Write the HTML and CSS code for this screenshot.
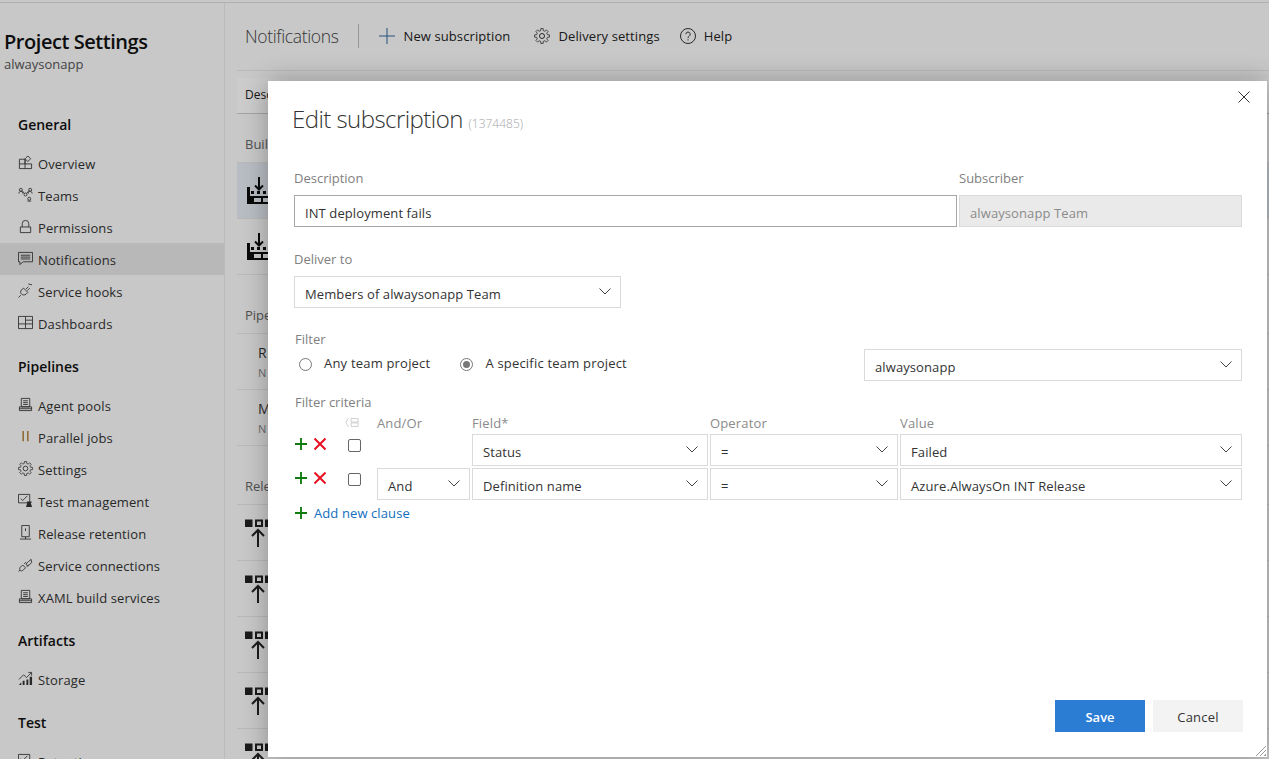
FILE: index.html
```html
<!DOCTYPE html>
<html lang="en">
<head>
  <meta charset="UTF-8">
  <meta name="viewport" content="width=device-width, initial-scale=1.0">
  <title>Edit subscription</title>
  <link rel="stylesheet" href="styles.css">
</head>
<body>
  <svg class="sprite" xmlns="http://www.w3.org/2000/svg">
    <defs>
      <symbol id="i-overview" viewBox="0 0 16 16"><path d="M1.500 4.500h6v10h-6zM1.500 9.500h13v5h-7M7.500 9.500V4.500M10.500 1l3 3-3 3-3-3z"/></symbol>
      <symbol id="i-teams" viewBox="0 0 16 16"><circle cx="3" cy="3" r="1.600"/><circle cx="13" cy="3" r="1.600"/><circle cx="8" cy="8" r="1.600"/><circle cx="12" cy="12.500" r="1.600"/><path d="M1 7c0-1.500 1-2.400 2-2.400S5 5.500 5 7M11 7c0-1.500 1-2.400 2-2.400S15 5.500 15 7M4.500 4l2.300 3M11.500 4L9.200 7M10 15h4"/></symbol>
      <symbol id="i-lock" viewBox="0 0 16 16"><path d="M2.500 8.500h11v6h-11zM4.500 8.500V5a3.500 3.500 0 0 1 7 0v3.500"/></symbol>
      <symbol id="i-chat" viewBox="0 0 16 16"><path d="M.5 1.500h15v10H5.500l-3.500 3v-3H.5zM3 4.500h10M3 6.500h10M3 8.500h10"/></symbol>
      <symbol id="i-hook" viewBox="0 0 16 16"><path d="M6 5.500l4.500 4.500-2 2c-1.500 1-3 1-4.500 0s-1.500-3-.5-4.500zM3 13l-2.500 2.500M8.500 6.500L11 4M10 8l2.500-2.500M11 1l4 1"/></symbol>
      <symbol id="i-board" viewBox="0 0 16 16"><path d="M.5 1.500h15v13H.5zM.5 9.500h15M8 1.500v13M8 5.500h7.500"/></symbol>
      <symbol id="i-agent" viewBox="0 0 16 16"><path d="M3.500 1.500h9v9h-9zM5.500 4h5M5.500 6h5M5.500 8h5M1.500 10.500h13v4h-13zM1.500 12.500h13"/></symbol>
      <symbol id="i-pause" viewBox="0 0 16 16"><path class="tan" d="M5.500 2v11M10.500 2v11"/></symbol>
      <symbol id="i-gear" viewBox="0 0 16 16"><path class="gear" d="M13.34 6.670L15.41 6.830V9.170L13.34 9.330 12.71 10.830 14.07 12.410 12.410 14.070 10.830 12.710 9.330 13.340 9.170 15.410H6.830L6.670 13.340 5.170 12.710 3.590 14.070 1.930 12.410 3.290 10.830 2.660 9.330 .59 9.170V6.830L2.660 6.670 3.290 5.170 1.930 3.590 3.590 1.930 5.170 3.290 6.670 2.660 6.830 .59H9.170L9.330 2.660 10.830 3.290 12.410 1.930 14.070 3.590 12.710 5.170z"/><circle cx="8" cy="8" r="2.500"/></symbol>
      <symbol id="i-test" viewBox="0 0 16 16"><path d="M.5 1.500h12v9H.5zM3 6l2 2 5-5"/><path class="solid" d="M9.500 9h5v1.500h-1l1.500 4.500H8.500l1.500-4.500h-.5z"/></symbol>
      <symbol id="i-retention" viewBox="0 0 16 16"><path d="M4 .5h8v12H4zM8 3.500v3M2 15h12M8 12.500V15"/></symbol>
      <symbol id="i-connect" viewBox="0 0 16 16"><path d="M2 11.500L5 8.500l3 3-3 3c-1 .5-2 .5-2.500 0s-1-2-.5-3zM.5 15.500L2 14M8.500 7.500L11 5l3-2.500 .5 3.500-3 3-1 1zM6.500 7.500l2-2M9.500 10l2-2"/></symbol>
      <symbol id="i-storage" viewBox="0 0 16 16"><path d="M1 9l5-5 3 3 5-5M11 1.500h3.500V5"/><path class="solid" d="M1 15l2.500-3V15zM5 10.500h2V15H5zM9 9h2v6H9zM12.500 6H15v9h-2.500z"/></symbol>
      <symbol id="i-plus" viewBox="0 0 16 16"><path d="M8 0v16M0 8h16"/></symbol>
      <symbol id="i-help" viewBox="0 0 16 16"><circle cx="8" cy="8" r="7.500"/><path d="M5.800 6.200a2.200 2.200 0 1 1 3.400 1.900c-.8.5-1.200 1-1.200 2M8 11.300v1.200"/></symbol>
      <symbol id="i-close" viewBox="0 0 12 12"><path d="M.5 .5l11 11M11.500 .5l-11 11"/></symbol>
      <symbol id="i-chev" viewBox="0 0 12 7"><path d="M.5 .5L6 6l5.500-5.500"/></symbol>
      <symbol id="i-factory" viewBox="0 0 30 28"><path class="solid" fill-rule="evenodd" d="M0 10h3v9h27v8H0zM7 21h7v4H7zM16 21h7v4h-7zM4 14h3v3H4zM10 14h3v3h-3zM16 14h3v3h-3zM22 14h3v3h-3z"/><path class="heavy" d="M12 0v12M8 8.500l4 4 4-4"/></symbol>
      <symbol id="i-release" viewBox="0 0 30 28"><path class="solid" d="M0 .5h7.500V8H0zM20 .5h8V8h-8z"/><path class="heavy" d="M11 1.500h6V7h-6zM13 28V11.500M7 17l6-6 6 6"/></symbol>
      <symbol id="i-order" viewBox="0 0 16 12"><path d="M7 1.500h8v4H7zM7 6.500h8v4H7zM4 1L1 6l3 5"/></symbol>
    </defs>
  </svg>

  <div class="page">
    <nav class="sidebar">
      <h1 class="project-title">Project Settings</h1>
      <div class="project-name">alwaysonapp</div>

      <h2 class="nav-head nav-head-first">General</h2>
      <a class="nav-item"><svg class="ico"><use href="#i-overview"/></svg>Overview</a>
      <a class="nav-item"><svg class="ico"><use href="#i-teams"/></svg>Teams</a>
      <a class="nav-item"><svg class="ico"><use href="#i-lock"/></svg>Permissions</a>
      <a class="nav-item active"><svg class="ico"><use href="#i-chat"/></svg>Notifications</a>
      <a class="nav-item"><svg class="ico"><use href="#i-hook"/></svg>Service hooks</a>
      <a class="nav-item"><svg class="ico"><use href="#i-board"/></svg>Dashboards</a>

      <h2 class="nav-head">Pipelines</h2>
      <a class="nav-item"><svg class="ico"><use href="#i-agent"/></svg>Agent pools</a>
      <a class="nav-item"><svg class="ico"><use href="#i-pause"/></svg>Parallel jobs</a>
      <a class="nav-item"><svg class="ico"><use href="#i-gear"/></svg>Settings</a>
      <a class="nav-item"><svg class="ico"><use href="#i-test"/></svg>Test management</a>
      <a class="nav-item"><svg class="ico"><use href="#i-retention"/></svg>Release retention</a>
      <a class="nav-item"><svg class="ico"><use href="#i-connect"/></svg>Service connections</a>
      <a class="nav-item"><svg class="ico"><use href="#i-agent"/></svg>XAML build services</a>

      <h2 class="nav-head">Artifacts</h2>
      <a class="nav-item"><svg class="ico"><use href="#i-storage"/></svg>Storage</a>

      <h2 class="nav-head">Test</h2>
      <a class="nav-item"><svg class="ico"><use href="#i-test"/></svg>Retention</a>
    </nav>

    <main class="content">
      <header class="toolbar">
        <span class="toolbar-title">Notifications</span>
        <span class="toolbar-sep"></span>
        <a class="tool"><svg class="tool-ico tool-plus"><use href="#i-plus"/></svg>New subscription</a>
        <a class="tool tool-delivery"><svg class="tool-ico"><use href="#i-gear"/></svg>Delivery settings</a>
        <a class="tool tool-help"><svg class="tool-ico"><use href="#i-help"/></svg>Help</a>
      </header>

      <div class="table-head">Description</div>

      <div class="group-label group-first">Build</div>
      <div class="row row-selected"><svg class="row-ico"><use href="#i-factory"/></svg></div>
      <div class="row"><svg class="row-ico"><use href="#i-factory"/></svg></div>

      <div class="group-label">Pipelines</div>
      <div class="row row-text"><span class="row-main">R</span><span class="row-sub">N</span></div>
      <div class="row row-text"><span class="row-main">M</span><span class="row-sub">N</span></div>

      <div class="group-label">Release</div>
      <div class="row"><svg class="row-ico rel"><use href="#i-release"/></svg></div>
      <div class="row"><svg class="row-ico rel"><use href="#i-release"/></svg></div>
      <div class="row"><svg class="row-ico rel"><use href="#i-release"/></svg></div>
      <div class="row"><svg class="row-ico rel"><use href="#i-release"/></svg></div>
      <div class="row"><svg class="row-ico rel"><use href="#i-release"/></svg></div>
    </main>
  </div>

  <div class="scrim"></div>

  <section class="dialog">
    <svg class="dialog-close"><use href="#i-close"/></svg>
    <h2 class="dialog-title">Edit subscription <small class="dialog-id">(1374485)</small></h2>

    <div class="form-top">
      <div class="field">
        <label class="label">Description</label>
        <div class="box box-dark">INT deployment fails</div>
      </div>
      <div class="field">
        <label class="label">Subscriber</label>
        <div class="box box-disabled">alwaysonapp Team</div>
      </div>
    </div>

    <div class="field deliver">
      <label class="label">Deliver to</label>
      <div class="box select">Members of alwaysonapp Team<svg class="chev"><use href="#i-chev"/></svg></div>
    </div>

    <div class="filter">
      <div class="filter-left">
        <div class="label label-tight">Filter</div>
        <div class="radios">
          <span class="radio"></span><span class="radio-text">Any team project</span>
          <span class="radio radio-on"></span><span class="radio-text">A specific team project</span>
        </div>
      </div>
      <div class="box select project-select">alwaysonapp<svg class="chev"><use href="#i-chev"/></svg></div>
    </div>

    <div class="label label-tight criteria-label">Filter criteria</div>
    <div class="criteria">
      <div class="crit-head crit-order"><svg class="order-ico"><use href="#i-order"/></svg></div>
      <div class="crit-head">And/Or</div>
      <div class="crit-head">Field*</div>
      <div class="crit-head">Operator</div>
      <div class="crit-head">Value</div>

      <div class="crit-tools">
        <svg class="add"><use href="#i-plus"/></svg>
        <svg class="del"><use href="#i-close"/></svg>
        <span class="check"></span>
      </div>
      <div></div>
      <div class="box select">Status<svg class="chev"><use href="#i-chev"/></svg></div>
      <div class="box select">=<svg class="chev"><use href="#i-chev"/></svg></div>
      <div class="box select">Failed<svg class="chev"><use href="#i-chev"/></svg></div>

      <div class="crit-tools">
        <svg class="add"><use href="#i-plus"/></svg>
        <svg class="del"><use href="#i-close"/></svg>
        <span class="check"></span>
      </div>
      <div class="box select">And<svg class="chev"><use href="#i-chev"/></svg></div>
      <div class="box select">Definition name<svg class="chev"><use href="#i-chev"/></svg></div>
      <div class="box select">=<svg class="chev"><use href="#i-chev"/></svg></div>
      <div class="box select">Azure.AlwaysOn INT Release<svg class="chev"><use href="#i-chev"/></svg></div>
    </div>

    <a class="add-clause"><svg class="add"><use href="#i-plus"/></svg>Add new clause</a>

    <footer class="dialog-foot">
      <button class="btn btn-save">Save</button>
      <button class="btn btn-cancel">Cancel</button>
    </footer>
    <div class="grip"></div>
  </section>
</body>
</html>
```

FILE: styles.css
```css
* {
  margin: 0;
  padding: 0;
  box-sizing: border-box;
}
html, body {
  width: 100%;
  height: 759px;
  overflow: hidden;
}
body {
  position: relative;
  font-family: "Open Sans", "Noto Sans", sans-serif;
  font-size: 13px;
  color: #333;
  background: #fafafa;
}
.sprite {
  position: absolute;
  width: 0;
  height: 0;
}
svg {
  fill: none;
  stroke: currentColor;
  stroke-width: 1;
}
svg .solid, .solid {
  fill: currentColor;
  stroke: none;
}
.heavy {
  stroke-width: 2;
}
.tan {
  stroke: #a86f1d;
  stroke-width: 1.4;
}
.gear {
  stroke-width: .8;
  stroke-linejoin: round;
}

/* page behind the dialog */
.page {
  display: flex;
  height: 759px;
  border-top: 1px solid #dcdcdc;
  margin-top: 2px;
}
.sidebar {
  flex: none;
  width: 225px;
  border-right: 1px solid #eaeaea;
  height: 100%;
}
.project-title {
  font-size: 20px;
  font-weight: 600;
  line-height: 26px;
  color: #111;
  padding: 26px 0 0 4px;
  letter-spacing: -.45px;
}
.project-name {
  font-size: 13px;
  line-height: 18px;
  color: #555;
  padding-left: 4px;
}
.nav-head {
  font-size: 14px;
  font-weight: 600;
  line-height: 22px;
  color: #111;
  padding-left: 18px;
  margin: 17px 0 11px;
}
.nav-head-first {
  margin-top: 41px;
}
.nav-item {
  display: flex;
  align-items: center;
  height: 32px;
  padding: 2px 0 0 18px;
  font-size: 13px;
  letter-spacing: .12px;
}
.nav-item.active {
  background: #e6e6e6;
}
.ico {
  flex: none;
  width: 15px;
  height: 15px;
  margin-right: 5px;
  margin-top: -4px;
  color: #333;
  stroke-width: .9;
}

.content {
  flex: 1;
  padding-left: 12px;
}
.toolbar {
  display: flex;
  align-items: center;
  height: 68px;
  padding: 0 0 2px 8px;
  border-bottom: 1px solid #e8e8e8;
  margin-bottom: 7px;
}
.toolbar-title {
  font-size: 17.500px;
  font-weight: 300;
  color: #444;
  letter-spacing: -.35px;
}
.toolbar-sep {
  width: 1px;
  height: 24px;
  background: #bbb;
  margin: 0 20px 0 19px;
}
.tool {
  display: flex;
  align-items: center;
  margin-right: 24px;
  font-size: 13px;
  letter-spacing: .1px;
  color: #222;
}
.tool-delivery {
  margin-right: 20px;
}
.tool-ico {
  width: 16px;
  height: 16px;
  margin-right: 9px;
  color: #333;
}
.tool-delivery .tool-ico, .tool-help .tool-ico {
  margin-right: 8px;
}
.tool-plus {
  color: #2f6596;
}
.table-head {
  height: 36px;
  line-height: 34px;
  padding-left: 8px;
  font-size: 12px;
  color: #222;
  background: #fff;
  border-bottom: 1px solid #ccc;
}
.group-label {
  height: 59px;
  padding: 30px 0 0 8px;
  line-height: 20px;
  font-size: 13px;
  color: #666;
  border-bottom: 1px solid #e8e8e8;
}
.group-first {
  height: 49px;
  padding-top: 20px;
}
.row {
  height: 56px;
  border-bottom: 1px solid #e8e8e8;
  display: flex;
  align-items: center;
  padding-left: 10px;
}
.row-selected {
  background: #e6edf4;
}
.row-ico {
  width: 30px;
  height: 28px;
  color: #0d0d0d;
}
.row-ico.rel {
  margin-left: -2px;
  color: #222;
}
.row-text {
  flex-direction: column;
  align-items: flex-start;
  justify-content: center;
  padding-left: 21px;
}
.row-main {
  font-size: 14px;
  line-height: 20px;
  color: #333;
}
.row-sub {
  font-size: 11px;
  line-height: 14px;
  margin-top: 3px;
  color: #888;
}

.scrim {
  position: absolute;
  inset: 0;
  background: rgba(0, 0, 0, .2);
}

/* dialog */
.dialog {
  position: absolute;
  left: 268px;
  top: 81px;
  width: 999px;
  height: 676px;
  background: #fff;
  box-shadow: 0 0 24px rgba(0, 0, 0, .3);
  padding: 0 25px 25px 26px;
  display: flex;
  flex-direction: column;
}
.dialog-close {
  position: absolute;
  top: 10px;
  right: 17px;
  width: 12px;
  height: 12px;
  color: #333;
}
.dialog-title {
  font-size: 24px;
  font-weight: 300;
  line-height: 32px;
  color: #333;
  margin: 22px 0 0 -2px;
  letter-spacing: -.55px;
}
.dialog-id {
  font-size: 12px;
  color: #a6a6a6;
  letter-spacing: 0;
}
.form-top {
  display: grid;
  grid-template-columns: 663px 283px;
  column-gap: 2px;
  margin-top: 28px;
}
.label {
  display: block;
  height: 27px;
  line-height: 20px;
  font-size: 13px;
  color: #808080;
}
.label-tight {
  height: 18px;
  line-height: 18px;
  margin-left: 1px;
}
.box {
  height: 32px;
  line-height: 34px;
  padding-left: 10px;
  border: 1px solid #dadada;
  font-size: 13px;
  letter-spacing: .1px;
  color: #333;
  white-space: nowrap;
}
.box-dark {
  border-color: #a6a6a6;
}
.box-disabled {
  background: #eaeaea;
  color: #8a8a8a;
}
.select {
  position: relative;
}
.chev {
  position: absolute;
  right: 9px;
  top: 11px;
  width: 12px;
  height: 7px;
  color: #444;
}
.deliver {
  width: 327px;
  margin-top: 22px;
}
.filter {
  display: flex;
  justify-content: space-between;
  align-items: flex-end;
  margin-top: 22px;
}
.filter-left {
  padding-bottom: 7px;
}
.radios {
  display: flex;
  align-items: center;
  height: 20px;
  padding-left: 5px;
  margin-top: 6px;
  letter-spacing: .2px;
}
.radio {
  width: 13px;
  height: 13px;
  border: 1px solid #777;
  border-radius: 50%;
  margin-right: 12px;
  position: relative;
}
.radio-on::after {
  content: "";
  position: absolute;
  inset: 2px;
  border-radius: 50%;
  background: #777;
}
.radio-text {
  margin: -2px 30px 0 0;
  color: #333;
}
.project-select {
  width: 378px;
}
.criteria-label {
  margin-top: 12px;
  margin-bottom: 2px;
}
.criteria {
  display: grid;
  grid-template-columns: 81px 93px 236px 188px 342px;
  column-gap: 2px;
  row-gap: 2px;
  grid-template-rows: 19px 32px 32px;
}
.crit-head {
  font-size: 13px;
  font-weight: 500;
  line-height: 24px;
  letter-spacing: .15px;
  color: #8a8a8a;
  margin-top: -2px;
}
.crit-order {
  padding-left: 51px;
}
.order-ico {
  width: 14px;
  height: 11px;
  color: #c8c8c8;
}
.crit-tools {
  display: flex;
  align-items: center;
  padding-left: 1px;
  margin-top: -12px;
}
.add {
  flex: none;
  width: 12px;
  height: 12px;
  color: #107c10;
  stroke-width: 2.500;
}
.del {
  flex: none;
  width: 12px;
  height: 12px;
  margin-left: 7px;
  color: #e81123;
  stroke-width: 2;
}
.check {
  width: 13px;
  height: 13px;
  border: 1px solid #666;
  border-radius: 2px;
  margin: 2px 0 0 22px;
}
.add-clause {
  display: flex;
  align-items: center;
  margin: 3px 0 0 1px;
  height: 20px;
  font-size: 13px;
  letter-spacing: .1px;
  color: #106ebe;
}
.add-clause .add {
  margin-right: 7px;
}
.dialog-foot {
  display: flex;
  justify-content: flex-end;
  gap: 8px;
  margin-top: auto;
  margin-right: -1px;
}
.btn {
  width: 90px;
  height: 32px;
  border: none;
  padding-top: 2px;
  font-family: inherit;
  font-size: 13px;
}
.btn-save {
  background: #2b7cd3;
  color: #fff;
  font-weight: 600;
}
.btn-cancel {
  background: #f3f3f3;
  color: #333;
  letter-spacing: .2px;
}
.grip {
  position: absolute;
  right: 1px;
  bottom: 1px;
  width: 11px;
  height: 11px;
  background: repeating-linear-gradient(135deg, transparent 0 2px, #999 2px 3px);
  clip-path: polygon(100% 0, 100% 100%, 0 100%);
}
```
